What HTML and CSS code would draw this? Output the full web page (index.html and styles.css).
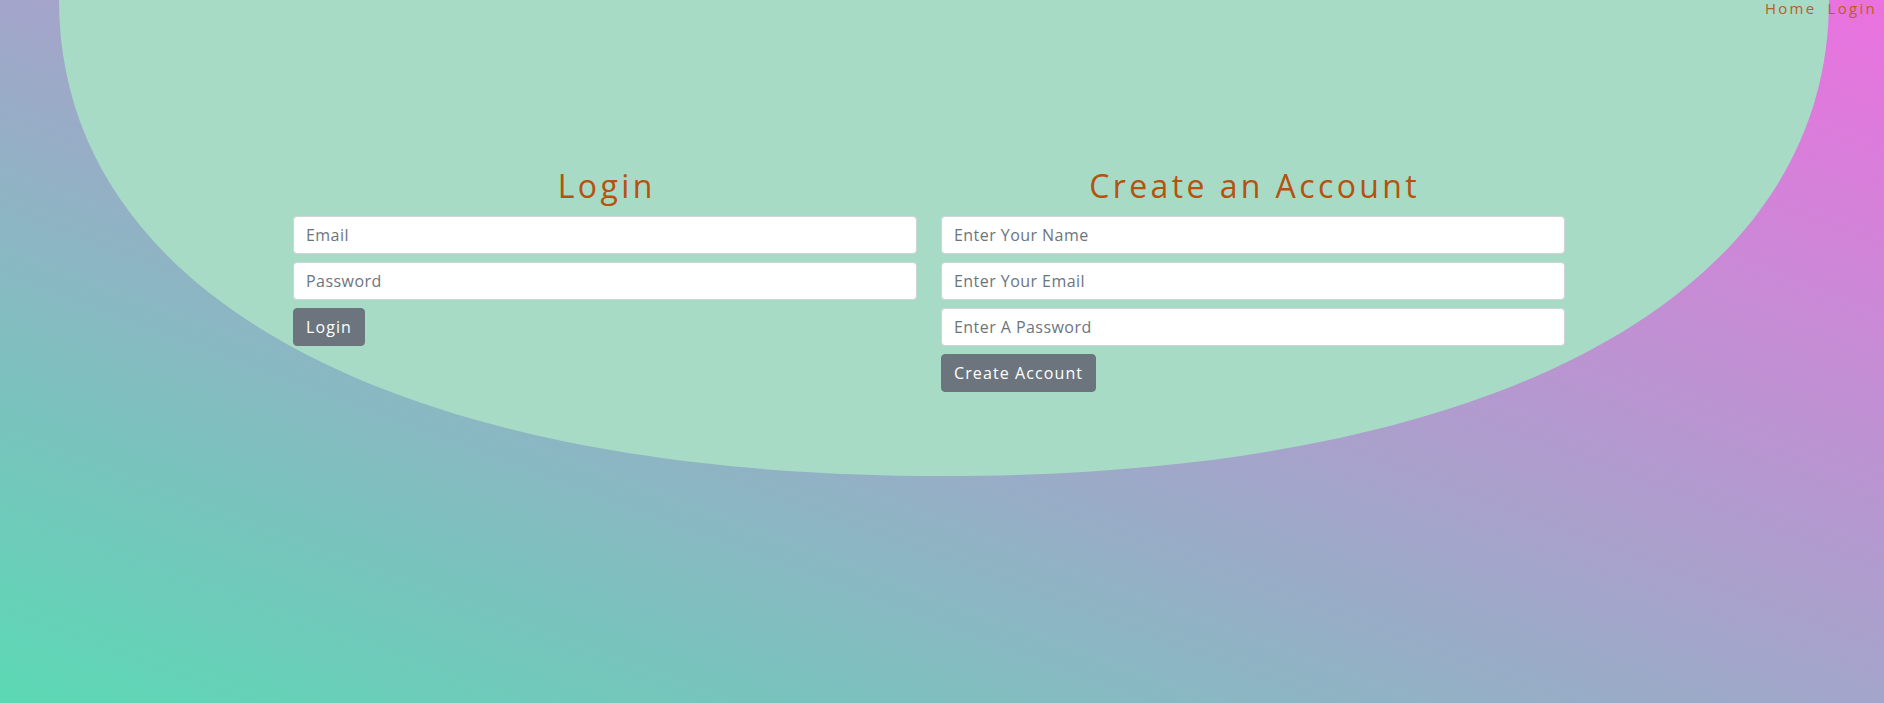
FILE: index.html
```html
<!DOCTYPE html>
<html lang="en">
<head>
<meta charset="utf-8">
<title>Login</title>
<link rel="stylesheet" href="styles.css">
</head>
<body>
<svg class="blob" viewBox="0 0 1884 476" preserveAspectRatio="none" aria-hidden="true">
  <path d="M59,0 C59,290 384,476 944,476 C1504,476 1829,290 1829,0 Z" fill="#a7dbc6"/>
</svg>
<nav class="topnav">
  <a href="#" class="nav-link">Home</a>
  <a href="#" class="nav-link">Login</a>
</nav>
<main class="container">
  <section class="col">
    <h2 class="title">Login</h2>
    <form class="form">
      <input class="field" type="email" placeholder="Email">
      <input class="field" type="password" placeholder="Password">
      <button class="btn" type="button">Login</button>
    </form>
  </section>
  <section class="col">
    <h2 class="title">Create an Account</h2>
    <form class="form">
      <input class="field" type="text" placeholder="Enter Your Name">
      <input class="field" type="email" placeholder="Enter Your Email">
      <input class="field" type="password" placeholder="Enter A Password">
      <button class="btn" type="button">Create Account</button>
    </form>
  </section>
</main>
</body>
</html>
```

FILE: styles.css
```css
html, body {
  margin: 0;
  padding: 0;
}
body {
  min-height: 100vh;
  position: relative;
  overflow: hidden;
  font-family: "Open Sans", "Lato", sans-serif;
  background: linear-gradient(to top right, #5bd9b4 0%, #eb71e0 100%);
}
.blob {
  position: absolute;
  top: 0;
  left: 0;
  width: 100%;
  height: 476px;
  z-index: 0;
}
.topnav {
  position: relative;
  z-index: 1;
  display: flex;
  justify-content: flex-end;
  gap: 11px;
  padding-right: 7px;
  height: 17px;
}
.nav-link {
  font-size: 15px;
  line-height: 17px;
  letter-spacing: 2.3px;
  color: #b8601c;
  text-decoration: none;
}
.container {
  position: relative;
  z-index: 1;
  width: 1272px;
  padding-right: 26px;
  margin: 150px auto 0;
  display: grid;
  grid-template-columns: 624px 624px;
  column-gap: 24px;
}
.title {
  margin: 0 0 11px;
  padding-left: 3.4px;
  font-size: 32px;
  line-height: 38px;
  font-weight: 400;
  letter-spacing: 3.4px;
  text-align: center;
  color: #b5520e;
}
.form {
  display: flex;
  flex-direction: column;
  align-items: flex-start;
  gap: 8px;
}
.field {
  box-sizing: border-box;
  width: 100%;
  height: 38px;
  padding: 6px 12px;
  border: 1px solid #ced4da;
  border-radius: 4px;
  background: #fff;
  font-family: inherit;
  font-size: 16px;
  letter-spacing: 0.45px;
  color: #495057;
  outline: none;
}
.field::placeholder {
  color: #6c757d;
}
.btn {
  height: 38px;
  padding: 6px 12px;
  border: 1px solid #6c757d;
  border-radius: 4px;
  background: #6c757d;
  color: #fff;
  font-family: inherit;
  font-size: 16px;
  letter-spacing: 1.1px;
  cursor: pointer;
}
```
